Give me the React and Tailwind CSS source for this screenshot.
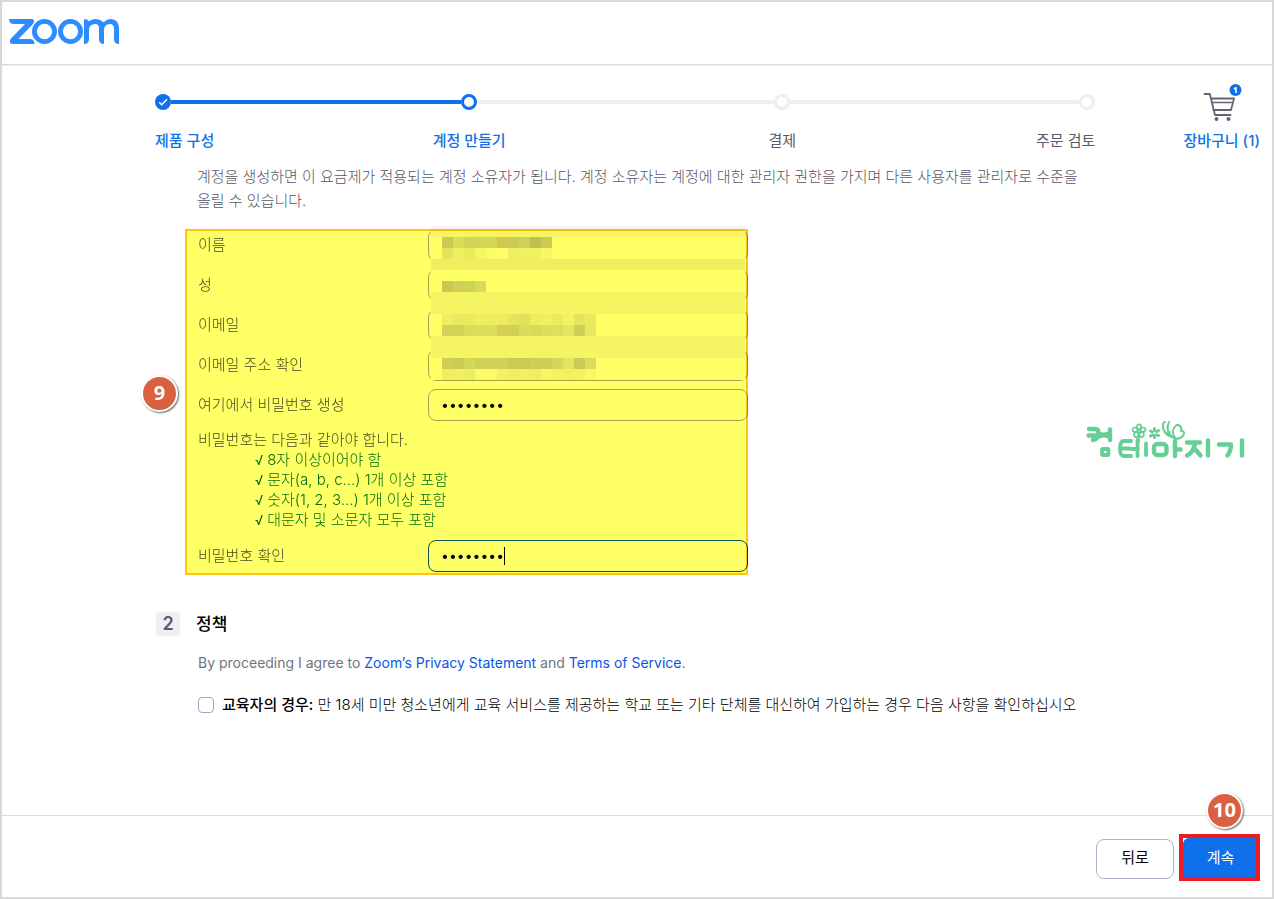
import React from "react";

const BLUE = "text-[#0e71eb]";

function ZoomLogo() {
  return (
    <svg width="112" height="28" viewBox="0 0 112 28" fill="none" stroke="#2d8cff" strokeWidth="4.8" aria-hidden="true">
      <path d="M0 1H22.500Q25.500 1 25 4L24 6L9.500 21H20.500Q25.500 21 25.500 26H4Q0 26 1 22L2 20.500L16 6H5Q0 6 0 1Z" fill="#2d8cff" stroke="none" />
      <circle cx="35.500" cy="13.500" r="10.100" />
      <circle cx="61.500" cy="13.500" r="10.100" />
      <path d="M75 1Q78.500 1 80 3.200Q83 1 86.500 1Q91 1 94.500 4.200Q98 1 101.500 1Q110 1.500 110 10V26Q105 26 105 21V10.500Q105 6 101 6Q95 6.500 95 12V26Q90 26 90 21V10.500Q90 6 86.200 6Q80 6.500 80 12V21Q80 26 75 26Z" fill="#2d8cff" stroke="none" />
    </svg>
  );
}

function Dot({ state }) {
  if (state === "done") {
    return (
      <svg width="16" height="16" viewBox="0 0 16 16" className="shrink-0" aria-hidden="true">
        <circle cx="8" cy="8" r="8" fill="#0e71eb" />
        <path d="M4.200 8.300l2.500 2.500L12 5.300" fill="none" stroke="#fff" strokeWidth="1.400" />
      </svg>
    );
  }
  const ring = state === "current" ? "border-[#0e71eb]" : "border-[#ededf4]";
  return <span className={`block size-4 shrink-0 rounded-full border-3 bg-white ${ring}`} />;
}

function Step({ state, label, align, tone }) {
  return (
    <li className={`flex w-4 shrink-0 flex-col gap-[21px] ${align}`}>
      <Dot state={state} />
      <span className={`whitespace-nowrap leading-5 ${tone}`}>{label}</span>
    </li>
  );
}

function Stepper() {
  return (
    <ol className="flex items-start text-[15px]">
      <Step state="done" label="제품 구성" align="items-start" tone="font-medium text-[#0e71eb]" />
      <li aria-hidden="true" className="mt-1.5 h-1 flex-[290] bg-[#0e71eb]" />
      <Step state="current" label="계정 만들기" align="items-center" tone="font-medium text-[#0e71eb]" />
      <li aria-hidden="true" className="mt-1.5 h-1 flex-[297] bg-[#ededf4]" />
      <Step state="next" label="결제" align="items-center" tone="font-normal text-[#5a5a68]" />
      <li aria-hidden="true" className="mt-1.5 h-1 flex-[289] bg-[#ededf4]" />
      <Step state="next" label="주문 검토" align="items-end" tone="font-normal text-[#5a5a68]" />
    </ol>
  );
}

function Cart() {
  return (
    <a href="#cart" className={`flex shrink-0 flex-col items-center whitespace-nowrap text-[15px] font-medium ${BLUE}`}>
      <svg width="40" height="40" viewBox="0 0 40 40" fill="none" stroke="#666473" strokeWidth="1.800" strokeLinecap="round" strokeLinejoin="round" aria-hidden="true">
        <path d="M2.500 11H7.800L13 32H28.500" />
        <path d="M9.500 15.500H32L29 27H11.500" />
        <path d="M11 19.500H30" strokeWidth="1.300" />
        <circle cx="14.500" cy="36" r="2" fill="#666473" stroke="none" />
        <circle cx="26.500" cy="36" r="2" fill="#666473" stroke="none" />
        <circle cx="33.500" cy="7" r="6" fill="#0e71eb" stroke="none" />
        <path d="M32.400 5.700L34 4.700V9.500" stroke="#fff" strokeWidth="1.600" />
      </svg>
      <span className="mt-2 leading-5">장바구니 (1)</span>
    </a>
  );
}

function Badge({ children }) {
  return (
    <span className="flex size-[37px] items-center justify-center rounded-full border-2 border-white bg-[#d96142] pb-0.5 font-['Open_Sans',sans-serif] text-xl leading-none font-bold text-white shadow-[1px_1px_2px_rgba(0,0,0,0.6)]">
      {children}
    </span>
  );
}

function Field({ id, label, type = "text", value = "", border = "border-[#a9a9b8]", children }) {
  return (
    <div className="flex items-center">
      <label htmlFor={id} className="w-[230px] shrink-0">{label}</label>
      <div className="relative w-80">
        <input id={id} type={type} defaultValue={value} className={`block h-8 w-full rounded-lg border bg-white px-3 pb-0.5 text-sm font-normal text-black outline-none ${border}`} />
        {children}
      </div>
    </div>
  );
}

const BANDS = [
  [0, 11, "#f5f5f6"],
  [11, 22, "#ffffff"],
  [33, 11, "#efefef"],
  [44, 22, "#ffffff"],
  [66, 22, "#f5f5f6"],
  [88, 22, "#ffffff"],
  [110, 22, "#f5f5f6"],
  [132, 22, "#ffffff"],
];

const CELLS = [
  [11, ["#cbcad0", "#dcdce2", "#d3d3d8", "#d4d4da", "#d6d6dc", "#d0c8c4", "#cacbd2", "#d1d1d8", "#bfc0c8", "#cacbd2"]],
  [22, ["#e5e5e8", "#efeff0", "#eaeaec", "#f6f6f6", "#fbfbfb", "#ffffff", "#eeeef0", "#f1f1f2", "#f1f1f3", "#f8f8f8"]],
  [55, ["#c8c9d0", "#d0d0d5", "#ced2d8", "#dadade"]],
  [88, ["#eeeef0", "#e9e9ec", "#ebebee", "#eeeef0", "#ededf0", "#ececee", "#e5e5e8", "#e1e1e5", "#eeeef0", "#efeff2", "#ebebed", "#f2f2f4", "#e5e5e8", "#ebebee"]],
  [99, ["#d4d3d9", "#d3d3da", "#d9dee0", "#dddde2", "#dedee3", "#d4d0d6", "#d3cfd6", "#d9dee0", "#d9d8de", "#dedee3", "#dfdfe3", "#e6e6e9", "#cfcfd6", "#e7e7ea"]],
  [132, ["#cfced5", "#cbcbd2", "#d4d8dc", "#d0d0d6", "#d0d0d6", "#d1d1d7", "#cacad1", "#cacad1", "#cfcfd5", "#cfcfd6", "#d6d6dc", "#e4e4e8", "#cccbd2", "#dcdce1"]],
  [143, ["#eeeef0", "#f0f0f2", "#eeeef0", "#fbfbfb", "#fbfbfb", "#f1f1f3", "#eeeef0", "#f1f1f3", "#eeeef0", "#f6f6f7", "#f2f2f4", "#f1f1f3", "#f3f3f5", "#f8f8f9"]],
];

function Mosaic() {
  return (
    <svg width="314" height="154" viewBox="0 0 314 154" shapeRendering="crispEdges" className="pointer-events-none absolute -top-[3px] left-[246px]" aria-hidden="true">
      {BANDS.map(([y, h, fill]) => (
        <rect key={y} x="0" y={y} width="314" height={h} fill={fill} />
      ))}
      {CELLS.map(([y, row]) =>
        row.map((fill, i) => <rect key={`${y}-${i}`} x={11 + i * 11} y={y} width="11" height="11" fill={fill} />)
      )}
    </svg>
  );
}

function AccountForm() {
  const rules = ["8자 이상이어야 함", "문자(a, b, c...) 1개 이상 포함", "숫자(1, 2, 3...) 1개 이상 포함", "대문자 및 소문자 모두 포함"];
  return (
    <div className="relative isolate mt-4 ml-[30px] w-[563px] pb-[3px] pl-[13px] text-[15px] leading-5 font-light text-[#4a4a58]">
      <div className="flex flex-col gap-2">
        <Field id="first" label="이름" />
        <Field id="last" label="성" />
        <Field id="email" label="이메일" />
        <Field id="email2" label="이메일 주소 확인" />
        <Field id="pw" type="password" value="password" label="여기에서 비밀번호 생성" />
      </div>
      <p className="mt-[9px]">비밀번호는 다음과 같아야 합니다.</p>
      <ul className="mb-2.5 pl-[57px] text-[#00701f]">
        {rules.map((r) => (
          <li key={r} className="flex gap-1">
            <span className="text-[13px] font-normal">√</span>
            <span>{r}</span>
          </li>
        ))}
      </ul>
      <Field id="pw2" type="password" value="password" label="비밀번호 확인" border="border-[#0956b5]">
        <span className="pointer-events-none absolute top-[7px] left-[76px] h-[18px] w-px bg-black" />
      </Field>
      <Mosaic />
      <div className="pointer-events-none absolute inset-0 border-2 border-[#ffc40d] bg-[#ffff66] mix-blend-multiply" />
      <div className="absolute top-[146px] -left-[44px]">
        <Badge>9</Badge>
      </div>
    </div>
  );
}

function Watermark() {
  return (
    <svg width="162" height="42" viewBox="0 0 162 42" fill="none" stroke="#66cf95" strokeWidth="4.400" strokeLinecap="round" strokeLinejoin="round" className="absolute top-[418px] right-[25px]" aria-hidden="true">
      <path d="M4 9H10Q13.500 9 13.500 13Q13.500 19 8 20M3.500 15.500H13M15 14Q20 16 25 13M25 9.500V20" />
      <path d="M15 13Q19 16 25 12V19Q19 16 13 19Z" fill="#66cf95" stroke="none" />
      <rect x="17" y="29" width="6.500" height="6" rx="1" strokeWidth="3.800" />
      <path d="M46 21H39Q35 21 35 28.500Q35 36 39 36H46M35 28.500H45M47 29H53M52.500 20V36M61 23.500V35" strokeWidth="3.800" />
      <rect x="69" y="24" width="12.500" height="11" rx="3.500" />
      <path d="M90 21V36M90 29.500H95.500" />
      <path d="M102 22.500H115M110 23Q109 32 102 35.500M110 29L115.500 35.500M123 20.500V35.500" />
      <path d="M134 24.500H146Q146 31 142.500 35.500M157 20.500V35.500" />
      <g strokeWidth="1.700">
        <circle cx="54" cy="11" r="1.500" />
        <ellipse cx="54" cy="6.800" rx="2.200" ry="2.500" />
        <ellipse cx="58" cy="9.700" rx="2.500" ry="2.200" />
        <ellipse cx="56.700" cy="14.600" rx="2.200" ry="2.500" />
        <ellipse cx="51.300" cy="14.600" rx="2.200" ry="2.500" />
        <ellipse cx="50" cy="9.700" rx="2.500" ry="2.200" />
        <path d="M54 17V22" />
        <path d="M69.500 8.500V17.500M65.500 11L73.500 15.500M73.500 10.500L65.500 16" strokeWidth="3" />
        <circle cx="69.500" cy="13" r="1.300" fill="#fff" stroke="none" />
        <path d="M91 19Q86 13 89 8Q92 3 95 6Q97 8 96 11Q101 11 98 16Q95 19 91 19ZM91 20Q86 15 83 14Q82 11 85 12M87 17Q80 10 84 2M90 18Q78 15 78 6Q78 2 80 2" strokeWidth="2" />
      </g>
    </svg>
  );
}

export default function App() {
  return (
    <div className="relative flex min-h-screen flex-col border-2 border-[#d9d9d9] bg-white font-['Inter','Noto_Sans_CJK_KR',sans-serif]">
      <header className="flex h-[63px] items-center border-b border-[#dcdcdc] px-[7px] pb-0.5 shadow-[0_1px_1px_rgba(0,0,0,0.06)]">
        <a href="#home" aria-label="zoom">
          <ZoomLogo />
        </a>
      </header>

      <main className="flex flex-1 items-start gap-[88px] pr-3 pl-[153px]">
        <div className="min-w-0 flex-1 pt-[29px]">
          <Stepper />
          <p className="mt-3.5 pl-[42px] text-[15px] leading-6 font-light text-[#565664]">
            계정을 생성하면 이 요금제가 적용되는 계정 소유자가 됩니다. 계정 소유자는 계정에 대한 관리자 권한을 가지며 다른 사용자를 관리자로 수준을 올릴 수 있습니다.
          </p>
          <AccountForm />

          <section className="mt-[37px]">
            <h2 className="flex items-center gap-4 text-[17px] leading-6 font-medium text-black">
              <span className="ml-px flex size-6 items-center justify-center rounded bg-[#efeff4] text-lg font-semibold text-[#5a5a68]">2</span>
              정책
            </h2>
            <p className="mt-[17px] pl-[43px] text-sm leading-5 text-[#6e7680]">
              By proceeding I agree to <a href="#privacy" className="text-[#0956e5]">Zoom’s Privacy Statement</a> and <a href="#terms" className="text-[#0956e5]">Terms of Service</a>.
            </p>
            <div className="mt-[22px] flex items-center gap-2 pl-[43px] text-[15px] leading-5 font-light whitespace-nowrap text-black">
              <input id="edu" type="checkbox" className="size-4 shrink-0 appearance-none rounded border border-[#a9a5c0] bg-white" />
              <label htmlFor="edu">
                <b className="font-medium">교육자의 경우:</b> 만 18세 미만 청소년에게 교육 서비스를 제공하는 학교 또는 기타 단체를 대신하여 가입하는 경우 다음 사항을 확인하십시오
              </label>
            </div>
          </section>
        </div>
        <div className="pt-[18px]">
          <Cart />
        </div>
      </main>

      <Watermark />

      <footer className="relative flex items-center justify-end gap-[5px] border-t border-[#dcdcdc] pt-[18px] pr-3 pb-4 text-[15px]">
        <button type="button" className="mt-0.5 h-10 w-[78px] rounded-lg border border-[#b3b0c8] bg-white text-black">뒤로</button>
        <div className="border-4 border-[#ed1c24]">
          <button type="button" className="block h-[39px] w-[73px] rounded-tl-md bg-[#0e71eb] pt-0.5 pl-0.5 text-white">계속</button>
        </div>
        <div className="absolute -top-6 right-[29px]">
          <Badge>10</Badge>
        </div>
      </footer>
    </div>
  );
}
